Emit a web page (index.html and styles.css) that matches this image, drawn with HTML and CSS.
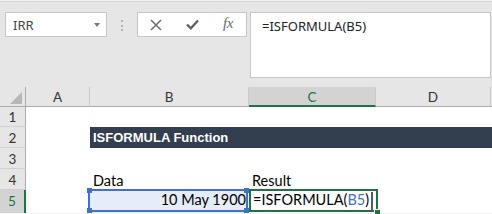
FILE: index.html
```html
<!DOCTYPE html>
<html>
<head>
<meta charset="utf-8">
<link rel="stylesheet" href="styles.css">
</head>
<body>
<div class="toolbar">
  <div class="namebox"><span class="name">IRR</span><span class="caret"></span></div>
  <div class="grip"><i></i><i></i><i></i></div>
  <div class="fxbox">
    <svg class="ico" width="12" height="12" viewBox="0 0 12 12"><path d="M1 1 L11 11 M11 1 L1 11" stroke="#707070" stroke-width="1.6" fill="none"/></svg>
    <svg class="ico" width="13" height="11" viewBox="0 0 13 11"><path d="M1 5.5 L4.8 9.3 L12 1.5" stroke="#5f5f5f" stroke-width="2.3" fill="none"/></svg>
    <span class="fx">fx</span>
  </div>
  <div class="formula">=ISFORMULA(B5)</div>
</div>
<div class="sheet">
  <div class="ch corner"><svg width="12" height="12" viewBox="0 0 12 12"><path d="M12 0 L12 12 L0 12 Z" fill="#b6b6b6"/></svg></div>
  <div class="ch">A</div>
  <div class="ch">B</div>
  <div class="ch sel">C</div>
  <div class="ch">D</div>
  <div class="ch end"></div>

  <div class="rh">1</div>
  <div class="cell"></div><div class="cell"></div><div class="cell"></div><div class="cell"></div><div class="cell"></div>

  <div class="rh">2</div>
  <div class="cell"></div>
  <div class="cell title">ISFORMULA Function</div>

  <div class="rh">3</div>
  <div class="cell"></div><div class="cell"></div><div class="cell"></div><div class="cell"></div><div class="cell"></div>

  <div class="rh">4</div>
  <div class="cell"></div>
  <div class="cell">Data</div>
  <div class="cell">Result</div>
  <div class="cell"></div><div class="cell"></div>

  <div class="rh rsel">5</div>
  <div class="cell r5"></div>
  <div class="cell r5 ref">10 May 1900<span class="h tl"></span><span class="h tr"></span><span class="h bl"></span><span class="h br"></span></div>
  <div class="cell r5 active">=ISFORMULA(<span class="blue">B5</span>)<span class="cursor"></span><span class="fill"></span></div>
  <div class="cell r5"></div><div class="cell r5"></div>
</div>
</body>
</html>
```
FILE: styles.css
```css
* { box-sizing: border-box; }
html, body { margin: 0; padding: 0; }
body {
  width: 492px;
  height: 214px;
  overflow: hidden;
  background: #f3f3f3;
  font-family: Lato, "Liberation Sans", sans-serif;
}
.toolbar {
  margin-top: 1px;
  border-top: 1px solid #d5d5d5;
  height: 86px;
  background: #e6e6e6;
  display: flex;
  align-items: flex-start;
  padding: 10px 0 0 5px;
}
.namebox {
  width: 102px;
  height: 25px;
  background: #fff;
  border: 1px solid #c6c6c6;
  display: flex;
  align-items: center;
  justify-content: space-between;
  padding: 0 6px 0 7px;
  font-family: "Noto Sans", sans-serif;
  font-size: 13px;
  color: #444;
}
.caret {
  width: 0;
  height: 0;
  border-left: 3.5px solid transparent;
  border-right: 3.5px solid transparent;
  border-top: 4px solid #7a7a7a;
}
.grip {
  width: 30px;
  display: flex;
  flex-direction: column;
  align-items: center;
  gap: 2.5px;
  padding-top: 8px;
}
.grip i {
  display: block;
  width: 2px;
  height: 2px;
  background: #b3b3b3;
}
.fxbox {
  width: 110px;
  height: 25px;
  background: #fff;
  border: 1px solid #c6c6c6;
  display: flex;
  align-items: center;
  padding-left: 12px;
  gap: 24px;
}
.ico { display: block; }
.fx {
  font-family: "Liberation Serif", serif;
  font-style: italic;
  font-size: 15px;
  color: #6a6a6a;
  letter-spacing: -0.5px;
  margin-top: -2px;
}
.formula {
  margin-left: 3px;
  width: 241px;
  height: 66px;
  background: #fff;
  border: 1px solid #c6c6c6;
  padding: 5px 0 0 11px;
  font-family: "Noto Sans", sans-serif;
  font-size: 13px;
  line-height: 16px;
  color: #222;
}
.sheet {
  display: grid;
  grid-template-columns: 26px 64px 159px 127px 115px 1fr;
  grid-template-rows: 20px 20px 21px 21px 21px 1fr;
  height: 126px;
  background: #fff;
  font-size: 14.5px;
  color: #000;
}
.ch {
  background: #e6e6e6;
  border-right: 1px solid #cacaca;
  border-bottom: 1px solid #ababab;
  display: flex;
  align-items: center;
  justify-content: center;
  padding-top: 1px;
  font-size: 13.5px;
  color: #333;
}
.ch.end { border-right: none; }
.corner {
  border-right-color: #ababab;
  justify-content: flex-end;
  align-items: flex-end;
  padding: 0 3px 2px 0;
}
.corner svg { display: block; }
.ch.sel {
  background: #d3d3d3;
  border-bottom: 2px solid #217346;
  color: #217346;
}
.rh {
  background: #e6e6e6;
  border-right: 1px solid #ababab;
  border-bottom: 1px solid #d0d0d0;
  display: flex;
  align-items: center;
  justify-content: center;
  padding-top: 1px;
  font-size: 13.5px;
  color: #333;
}
.rh.rsel {
  background: #d3d3d3;
  border-right: 2px solid #217346;
  border-bottom: none;
  color: #217346;
  align-items: flex-start;
  padding-top: 3px;
}
.cell {
  display: flex;
  align-items: flex-end;
  padding: 0 3px 0 3px;
  line-height: 18px;
  white-space: nowrap;
}
.title {
  grid-column: 3 / -1;
  background: #333f4f;
  color: #fff;
  font-family: "Liberation Sans", sans-serif;
  font-weight: bold;
  font-size: 13px;
  line-height: 16px;
  padding-bottom: 2px;
}
.r5 { padding-bottom: 4px; }
.ref {
  position: relative;
  justify-content: flex-end;
  background: #e6edf8;
}
.ref::before {
  content: "";
  position: absolute;
  left: -2px;
  right: 1px;
  top: -1px;
  bottom: 1px;
  border: 2px solid #3f72c6;
}
.h {
  position: absolute;
  width: 5px;
  height: 5px;
  background: #3f72c6;
}
.h.tl { left: -3px; top: -2px; }
.h.tr { right: 0; top: -2px; }
.h.bl { left: -3px; bottom: 0; }
.h.br { right: 0; bottom: 0; }
.active {
  position: relative;
  padding-left: 4px;
}
.active::before {
  content: "";
  position: absolute;
  left: 0;
  right: -2px;
  top: -1px;
  bottom: 1px;
  border: 2px solid #217346;
}
.blue { color: #3b73c8; }
.cursor {
  display: inline-block;
  width: 2px;
  height: 18px;
  margin-left: 2px;
  margin-bottom: -1px;
  background: #5a5a5a;
  align-self: flex-end;
}
.fill {
  position: absolute;
  right: -4px;
  bottom: -1px;
  width: 6px;
  height: 5px;
  background: #217346;
  border-left: 1px solid #fff;
  border-top: 1px solid #fff;
}
```
